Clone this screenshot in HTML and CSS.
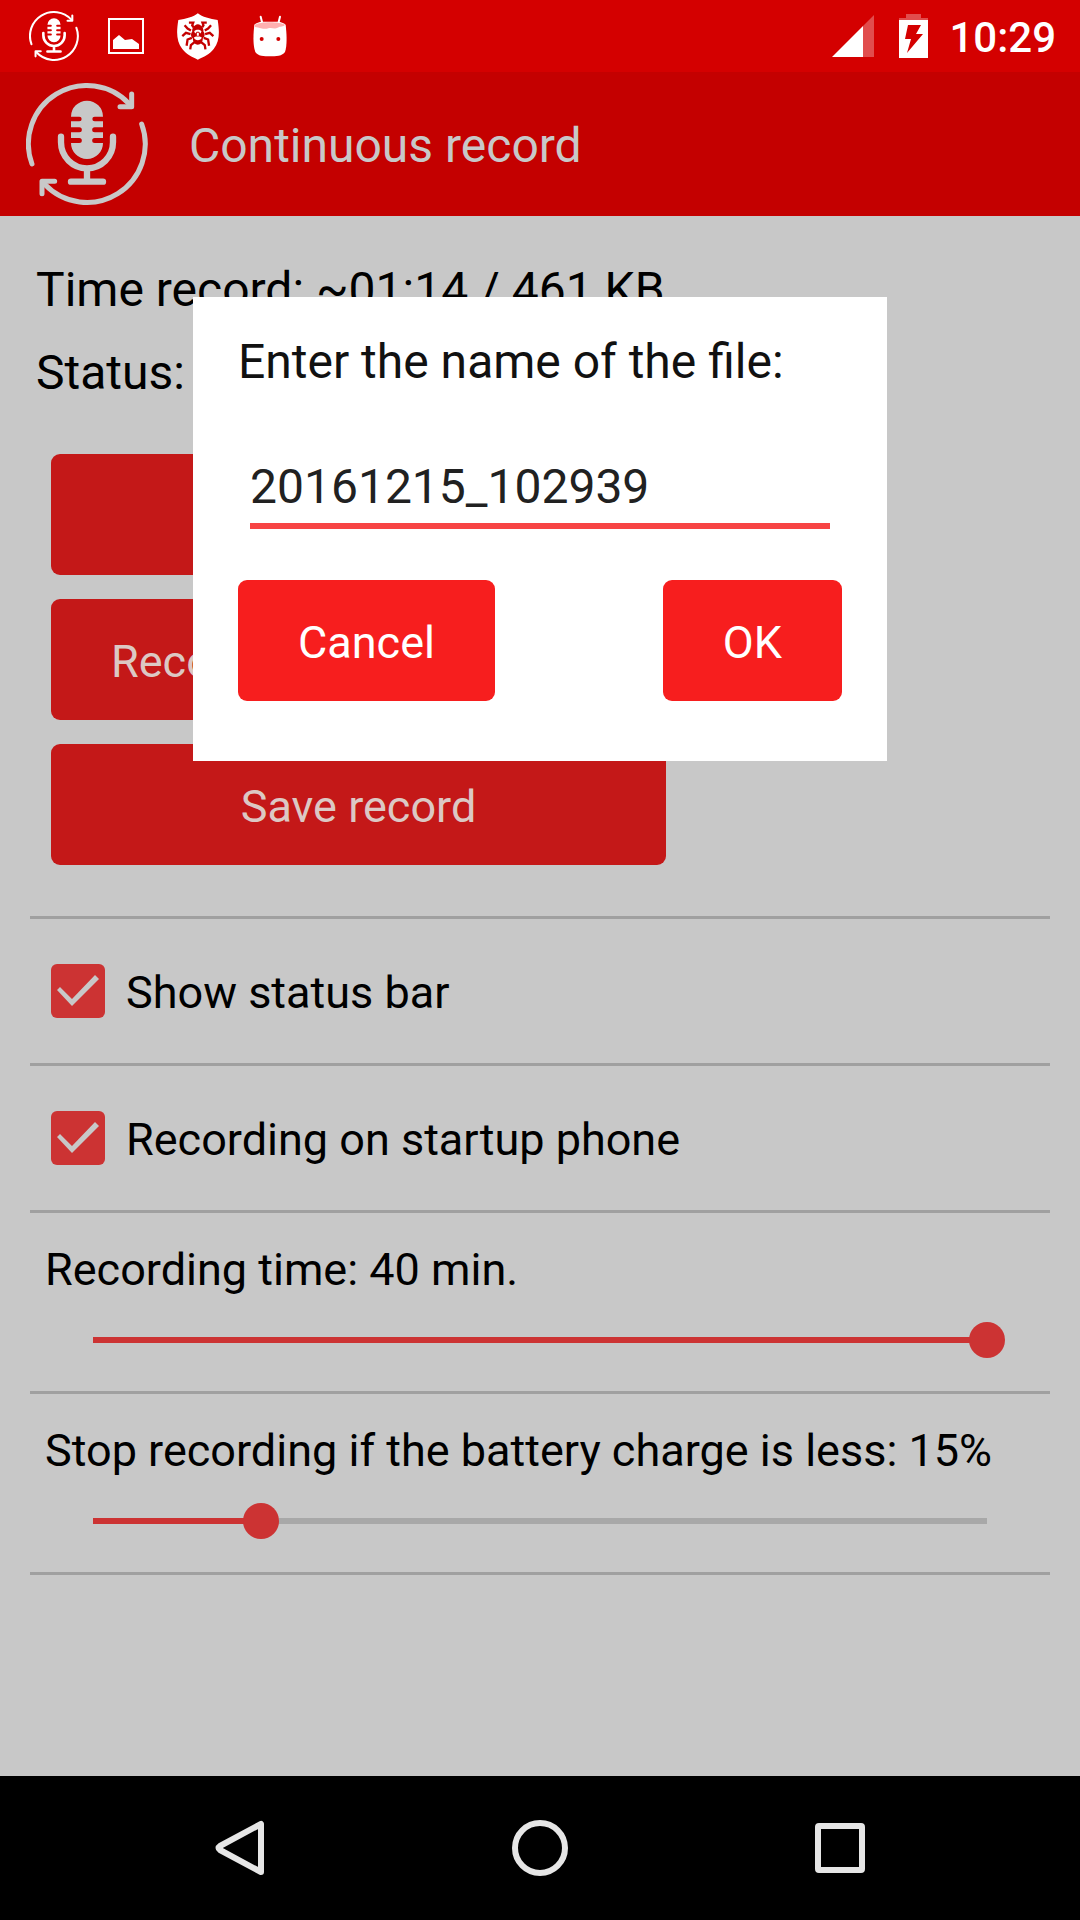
FILE: index.html
```html
<!DOCTYPE html>
<html lang="en">
<head>
  <meta charset="UTF-8">
  <meta name="viewport" content="width=device-width, initial-scale=1.0">
  <title>Continuous record</title>
  <link rel="stylesheet" href="styles.css">
</head>
<body>

  <!-- Shared microphone logo -->
  <svg class="symbols" aria-hidden="true">
    <symbol id="mic" viewBox="0 0 366 366">
      <g fill="none" stroke="currentColor" stroke-linecap="round" stroke-linejoin="round">
        <path stroke-width="15" d="M18 243A175 175 0 0 1 310 63M347 123A175 175 0 0 1 56 304"/>
        <path stroke-width="15" d="M317 33V71H282M86 295H48V332"/>
        <path stroke-width="19" d="M105 161V178A78 78 0 0 0 261 178V161M183 256V296M135 296H231"/>
      </g>
      <path fill="currentColor" d="M135 101A48 48 0 0 1 231 101H206A7 7 0 0 0 206 115H231V133H206A7 7 0 0 0 206 148H231V165H206A7 7 0 0 0 206 180H231A48 48 0 0 1 135 180H160A7 7 0 0 0 160 165H135V148H160A7 7 0 0 0 160 133H135V115H160A7 7 0 0 0 160 101Z"/>
    </symbol>
  </svg>

  <div class="status-bar">
    <div class="notifications">
      <span class="slot"><svg width="50" height="50"><use href="#mic"/></svg></span>
      <span class="slot">
        <svg width="36" height="36" viewBox="0 0 36 36">
          <rect x="1" y="1" width="34" height="34" fill="none" stroke="#fff" stroke-width="2"/>
          <path fill="#fff" d="M5 31V22L11 17L17 22L24 21L31 26V31Z"/>
        </svg>
      </span>
      <span class="slot">
        <svg width="42" height="47" viewBox="0 0 127 140">
          <path fill="#fff" d="M63 0C76 11 100 17 123 20C129 58 129 84 111 108C99 124 81 132 63 140C45 132 28 124 16 108C-2 84-2 58 4 20C27 17 50 11 63 0Z"/>
          <g fill="none" stroke="#c40000" stroke-width="7">
            <path d="M50 42L46 36L49 28H36M42 52L32 46L23 36M41 63L27 59L16 69M45 74L32 79L29 98M54 86L42 96L40 109"/>
            <path d="M76 42L80 36L77 28H90M84 52L94 46L103 36M85 63L99 59L110 69M81 74L94 79L97 98M72 86L84 96L86 109"/>
          </g>
          <path fill="#c40000" d="M63 33C75 35 81 45 80 56C86 62 84 72 78 76C78 88 71 94 63 95C55 94 48 88 48 76C42 72 40 62 46 56C45 45 51 35 63 33Z"/>
          <path fill="#fff" d="M52 55C54 48 72 48 74 55L71 61L66 56H60L55 61ZM60 59H66V68H60ZM51 73L57 70H69L75 73C72 84 54 84 51 73Z"/>
        </svg>
      </span>
      <span class="slot">
        <svg width="34" height="42" viewBox="0 0 102 124">
          <path fill="none" stroke="#fff" stroke-width="6" stroke-linecap="round" d="M23 4L29 28M81 4L75 28"/>
          <path fill="#fff" d="M4 28C1 55-1 90 7 110C13 122 34 123 51 123C68 123 89 122 96 110C103 90 101 55 98 28C92 22 84 20 74 19H28C18 20 10 22 4 28Z"/>
          <path fill="#ffb0b0" d="M6 28C20 18 82 18 96 28C92 36 82 31 74 37C65 43 55 35 46 39C34 43 24 38 6 35Z"/>
          <circle cx="26" cy="71" r="6" fill="#d40000"/>
          <circle cx="76" cy="71" r="6" fill="#d40000"/>
        </svg>
      </span>
    </div>
    <svg width="42" height="42" viewBox="0 0 42 42">
      <path fill="#fff" fill-opacity=".3" d="M42 0V42H31V11Z"/>
      <path fill="#fff" d="M31 11V42H0Z"/>
    </svg>
    <svg class="battery" width="29" height="44" viewBox="0 0 29 44">
      <path fill="#fff" fill-opacity=".3" d="M7 0H22V4H29V6H0V4H7Z"/>
      <path fill="#fff" fill-rule="evenodd" d="M0 6H29V44H0ZM9 11L6 25H12L8 39L24 20H17L22 11Z"/>
    </svg>
    <time class="clock">10:29</time>
  </div>

  <header class="app-bar">
    <svg width="122" height="122"><use href="#mic"/></svg>
    <h1>Continuous record</h1>
  </header>

  <main class="content">
    <div class="info">
      <p>Time record: ~01:14 / 461 KB</p>
      <p>Status:</p>
    </div>

    <div class="actions">
      <button class="btn" aria-label="Start"></button>
      <button class="btn btn-left">Record</button>
      <button class="btn">Save record</button>
    </div>

    <label class="row check-row">
      <input type="checkbox" class="check" checked>
      <span>Show status bar</span>
    </label>

    <label class="row check-row">
      <input type="checkbox" class="check" checked>
      <span>Recording on startup phone</span>
    </label>

    <div class="row slider-row">
      <label for="rec-time">Recording time: 40 min.</label>
      <input type="range" id="rec-time" class="slider" min="0" max="40" value="40" style="--fill: 100%">
    </div>

    <div class="row slider-row last">
      <label for="battery">Stop recording if the battery charge is less: 15%</label>
      <input type="range" id="battery" class="slider" min="0" max="80" value="15" style="--fill: 19%">
    </div>
  </main>

  <nav class="nav-bar">
    <button aria-label="Back">
      <svg width="56" height="56" viewBox="0 0 56 56"><path d="M49 4V52L8 30Q5 28 8 26Z"/></svg>
    </button>
    <button aria-label="Home">
      <svg width="56" height="56" viewBox="0 0 56 56"><circle cx="28" cy="28" r="25"/></svg>
    </button>
    <button aria-label="Recent apps">
      <svg width="56" height="56" viewBox="0 0 56 56"><rect x="6" y="6" width="44" height="44" rx="1"/></svg>
    </button>
  </nav>

  <!-- Save dialog -->
  <div class="overlay">
    <form class="dialog" role="dialog">
      <label for="file-name">Enter the name of the file:</label>
      <input type="text" id="file-name" class="file-name" value="20161215_102939">
      <div class="dialog-buttons">
        <button type="button" class="btn btn-bright">Cancel</button>
        <button type="button" class="btn btn-bright">OK</button>
      </div>
    </form>
  </div>

</body>
</html>
```
FILE: styles.css
```css
* {
  box-sizing: border-box;
}
body {
  margin: 0;
  min-height: 100vh;
  display: flex;
  flex-direction: column;
  background-color: #c8c8c8;
  color: #000;
  font-family: Roboto, sans-serif;
  font-size: 45px;
  line-height: 53px;
}
button, input {
  font: inherit;
  margin: 0;
}
svg {
  display: block;
  flex: none;
}
.symbols {
  position: absolute;
  width: 0;
  height: 0;
}

/* top bars */
.status-bar {
  display: flex;
  align-items: center;
  height: 72px;
  padding: 0 24px 0 18px;
  background-color: #d40000;
  color: #fff;
}
.notifications {
  display: flex;
  flex: 1;
}
.slot {
  display: flex;
  align-items: center;
  justify-content: center;
  width: 72px;
  height: 72px;
}
.battery {
  margin: 0 21px 0 25px;
}
.clock {
  padding-top: 2px;
  font-size: 42px;
  font-weight: 500;
}
.app-bar {
  display: flex;
  align-items: center;
  gap: 41px;
  height: 144px;
  padding: 0 26px;
  background-color: #c40000;
  color: #c8c8c8;
}
.app-bar h1 {
  margin: 0;
  padding-top: 3px;
  font-size: 48px;
  font-weight: 400;
  line-height: 56px;
}

/* page */
.content {
  flex: 1;
  padding: 46px 30px 0;
}
.info {
  display: flex;
  flex-direction: column;
  gap: 27px;
  padding-left: 6px;
  font-size: 48px;
  line-height: 56px;
}
.info p {
  margin: 0;
}
.actions {
  display: flex;
  flex-direction: column;
  gap: 24px;
  max-width: 636px;
  padding: 53px 0 51px 21px;
}
.btn {
  height: 121px;
  padding: 36px 60px 32px;
  border: none;
  border-radius: 9px;
  background-color: #c41818;
  color: #dcc8c4;
  cursor: pointer;
}
.btn-left {
  text-align: left;
}
.btn-bright {
  background-color: #f71e1e;
  color: #fff;
}

/* settings */
.row {
  border-top: 3px solid #a0a0a0;
}
.last {
  border-bottom: 3px solid #a0a0a0;
}
.check-row {
  display: flex;
  align-items: center;
  gap: 21px;
  height: 147px;
  padding-left: 21px;
}
.check-row span {
  padding-top: 2px;
}
.check {
  appearance: none;
  width: 54px;
  height: 54px;
  border-radius: 6px;
  background-color: #cc3333;
}
.check:checked::before {
  content: "";
  display: block;
  width: 54px;
  height: 54px;
  background-color: #c8c8c8;
  clip-path: polygon(6px 26px, 9px 23px, 21px 35px, 44px 11px, 48px 15px, 21px 42px);
}
.slider-row {
  display: flex;
  flex-direction: column;
  gap: 26px;
  padding: 30px 45px 33px 15px;
}
.slider {
  appearance: none;
  height: 36px;
  margin-left: 30px;
  background: linear-gradient(to right, #cc3333 var(--fill), #a8a8a8 var(--fill)) center / calc(100% - 36px) 6px no-repeat;
}
.slider::-webkit-slider-thumb {
  appearance: none;
  width: 36px;
  height: 36px;
  border-radius: 50%;
  background-color: #cc3333;
}

/* navigation */
.nav-bar {
  display: flex;
  height: 144px;
  padding: 0 90px;
  background-color: #000;
}
.nav-bar button {
  flex: 1;
  display: flex;
  align-items: center;
  justify-content: center;
  border: none;
  background: none;
}
.nav-bar svg {
  fill: none;
  stroke: #e6e6e6;
  stroke-width: 6;
  stroke-linejoin: round;
}

/* dialog */
.overlay {
  position: absolute;
  top: 297px;
  left: 0;
  right: 0;
  display: flex;
  justify-content: center;
}
.dialog {
  display: flex;
  flex-direction: column;
  width: 694px;
  max-width: 90%;
  padding: 37px 45px 60px;
  background-color: #fff;
  color: #111;
  font-size: 48px;
  line-height: 56px;
}
.file-name {
  margin: 69px 12px 51px;
  padding: 0 0 8px;
  border: none;
  border-bottom: 6px solid #f74444;
  border-radius: 0;
  outline: none;
  background: none;
  color: #212121;
}
.dialog-buttons {
  display: flex;
  justify-content: space-between;
  font-size: 45px;
  line-height: 53px;
}
```
